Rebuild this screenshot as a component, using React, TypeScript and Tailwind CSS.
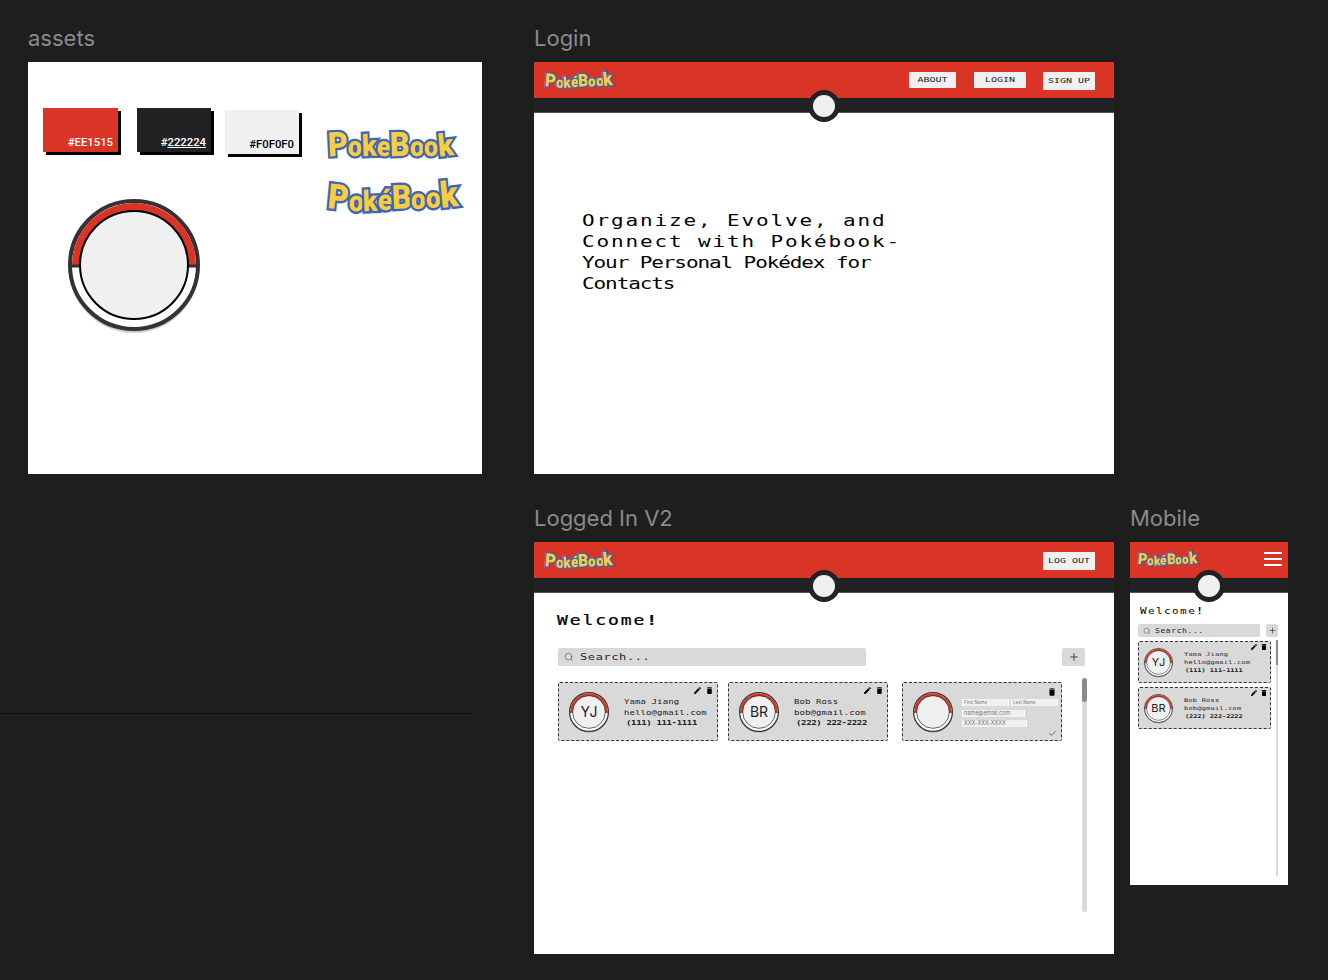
import { Check, Plus, Search } from "lucide-react";
import { MdDelete, MdEdit } from "react-icons/md";

const pixel = "[font-family:'DejaVu_Sans_Mono',monospace]";

const plainLetters = [
  { c: "P", cls: "text-[1.22em] -rotate-3" },
  { c: "o", cls: "rotate-3" },
  { c: "k", cls: "-rotate-2 text-[1.08em]" },
  { c: "e", cls: "rotate-3" },
  { c: "B", cls: "text-[1.22em] -rotate-2" },
  { c: "o", cls: "rotate-2" },
  { c: "o", cls: "-rotate-2" },
  { c: "k", cls: "-rotate-6 text-[1.12em]" },
];

const accentLetters = [
  { c: "P", cls: "text-[1.22em] rotate-6 translate-y-[0.06em]" },
  { c: "o", cls: "rotate-3 translate-y-[0.14em]" },
  { c: "k", cls: "-rotate-2 translate-y-[0.14em]" },
  { c: "é", cls: "rotate-3 translate-y-[0.1em]" },
  { c: "B", cls: "text-[1.16em] -rotate-3 translate-y-[0.04em]" },
  { c: "o", cls: "rotate-2 translate-y-[0.06em]" },
  { c: "o", cls: "-rotate-2 translate-y-[0.02em]" },
  { c: "k", cls: "-rotate-6 text-[1.26em]" },
];

function Logo({ accent = true, className = "" }: { accent?: boolean; className?: string }) {
  const letters = accent ? accentLetters : plainLetters;
  return (
    <div
      className={`flex items-baseline font-black leading-none text-[#f8cd42] origin-left scale-y-[1.1] [font-family:'Roboto',sans-serif] [-webkit-text-stroke:0.17em_#3f66b2] [paint-order:stroke_fill] ${className}`}
    >
      {letters.map((l, i) => (
        <span key={i} className={`inline-block ${l.cls}`}>
          {l.c}
        </span>
      ))}
    </div>
  );
}

function Ball({ className = "" }: { className?: string }) {
  return (
    <svg viewBox="0 0 132 132" className={`shrink-0 overflow-visible ${className}`}>
      <circle cx="66" cy="69" r="65" fill="#000" opacity="0.2" />
      <circle cx="66" cy="66" r="64" fill="#fff" stroke="#333" strokeWidth="4" />
      <path d="M4 66a62 62 0 0 1 124 0z" fill="#da3427" />
      <path d="M2 67h128" stroke="#333" strokeWidth="3" />
      <circle cx="66" cy="66" r="54" fill="#f0f0f0" stroke="#000" strokeWidth="2" />
    </svg>
  );
}

function Avatar({ initials, size }: { initials?: string; size: "lg" | "sm" }) {
  return (
    <div
      className={`relative flex items-center justify-center shrink-0 ${
        size === "lg" ? "w-10 h-10" : "w-[29px] h-[29px]"
      }`}
    >
      <Ball className="absolute inset-0 w-full h-full" />
      {initials && (
        <span
          className={`relative text-[#222224] [font-family:'Inter',sans-serif] ${
            size === "lg" ? "text-[14px]" : "text-[11px]"
          }`}
        >
          {initials}
        </span>
      )}
    </div>
  );
}

function Header({ children, logoClass }: { children: React.ReactNode; logoClass: string }) {
  return (
    <div className="relative shrink-0">
      <div className="h-9 bg-[#da3427] flex items-center justify-between">
        <Logo className={logoClass} />
        {children}
      </div>
      <div className="h-[15px] bg-[#222224] border-b border-[#555]" />
      <div className="absolute left-1/2 top-[28px] -translate-x-1/2 w-8 h-8 rounded-full bg-[#f0f0f0] border-[5.5px] border-[#222224]" />
    </div>
  );
}

function NavButton({ label, className = "" }: { label: string; className?: string }) {
  return (
    <div className={`bg-[#f0f0f0] flex items-center justify-center text-[#222224] ${className}`}>
      <span className={`text-[10px] scale-y-[0.78] ${pixel}`}>{label}</span>
    </div>
  );
}

function ContactCard({
  name,
  email,
  phone,
  initials,
}: {
  name: string;
  email: string;
  phone: string;
  initials: string;
}) {
  return (
    <div className="relative w-40 h-[59px] bg-[#d9d9d9] rounded-[2px] border border-dashed border-[#333] flex items-center pl-[10px] gap-[15px]">
      <Avatar initials={initials} size="lg" />
      <div className={`text-[#222224] text-[9px] leading-[10.5px] tracking-[0.1px] mt-[3px] ${pixel}`}>
        <div className="scale-y-[0.75] origin-left">{name}</div>
        <div className="scale-y-[0.75] origin-left">{email}</div>
        <div className="scale-y-[0.75] origin-left font-bold tracking-[-0.35px] ml-[2px]">{phone}</div>
      </div>
      <div className="absolute right-[3px] top-[3px] flex gap-[3px] text-black">
        <MdEdit className="w-[9px] h-[9px]" />
        <MdDelete className="w-[9px] h-[9px]" />
      </div>
    </div>
  );
}

function EditCard() {
  const field =
    "h-[7px] bg-[#f0f0f0] border-x border-white leading-[7px] pl-[1px] text-[#777] [font-family:'Inter',sans-serif]";
  return (
    <div className="relative w-40 h-[59px] bg-[#d9d9d9] rounded-[2px] border border-dashed border-[#333] flex items-center pl-[10px] gap-[9px]">
      <Avatar size="lg" />
      <div className="flex flex-col mt-[3px]">
        <div className="flex gap-[2px]">
          <div className={`w-[47px] text-[4.5px] ${field}`}>First Name</div>
          <div className={`w-[47px] text-[4.5px] ${field}`}>Last Name</div>
        </div>
        <div className={`w-[63px] mt-[4px] text-[5.5px] ${field}`}>name@email.com</div>
        <div className={`w-[65px] mt-[3px] text-[5.5px] ${field}`}>XXX-XXX-XXXX</div>
      </div>
      <MdDelete className="absolute right-[4px] top-[4px] w-[10px] h-[10px] text-black" />
      <Check className="absolute right-[4px] bottom-[2px] w-[9px] h-[9px] text-[#555]" strokeWidth={2} />
    </div>
  );
}

function MobileCard({
  name,
  email,
  phone,
  initials,
}: {
  name: string;
  email: string;
  phone: string;
  initials: string;
}) {
  return (
    <div className="relative w-[133px] h-[42px] bg-[#d9d9d9] rounded-[2px] border border-dashed border-[#333] flex items-center pl-[5px] gap-[11px]">
      <Avatar initials={initials} size="sm" />
      <div className={`text-[#222224] text-[7px] leading-[8px] tracking-[0.2px] ${pixel}`}>
        <div className="scale-y-[0.75] origin-left">{name}</div>
        <div className="scale-y-[0.75] origin-left">{email}</div>
        <div className="scale-y-[0.75] origin-left font-bold tracking-[-0.1px] ml-[1px]">{phone}</div>
      </div>
      <div className="absolute right-[2px] top-[1px] flex gap-[2px] text-black">
        <MdEdit className="w-[8px] h-[8px]" />
        <MdDelete className="w-[8px] h-[8px]" />
      </div>
    </div>
  );
}

function Swatch({
  hex,
  className,
  underline = false,
}: {
  hex: string;
  className: string;
  underline?: boolean;
}) {
  return (
    <div
      className={`h-[44px] shadow-[3px_3px_0_#000] flex items-end justify-end pr-[5px] pb-px text-[11.3px] leading-[16px] font-medium [font-family:'Roboto',sans-serif] ${className}`}
    >
      {underline ? (
        <span>
          #<span className="underline">{hex}</span>
        </span>
      ) : (
        <span>#{hex}</span>
      )}
    </div>
  );
}

function Frame({ label, className, children }: { label: string; className: string; children: React.ReactNode }) {
  return (
    <div className={`absolute ${className}`}>
      <div className="absolute -top-[38px] left-0 text-[22px] leading-[28px] text-[#8a8a8a] [font-family:'Inter',sans-serif]">
        {label}
      </div>
      <div className="w-full h-full bg-white flex flex-col overflow-hidden">{children}</div>
    </div>
  );
}

export default function App() {
  return (
    <div className="relative w-[1328px] h-[980px] bg-[#1e1e1e] overflow-hidden">
      <div className="absolute left-0 top-[713px] w-[472px] h-px bg-[#111]" />

      <Frame label="assets" className="left-[28px] top-[62px] w-[454px] h-[412px]">
        <div className="flex pt-[46px] pl-[15px]">
          <div className="w-[284px]">
            <div className="flex items-start">
              <Swatch hex="EE1515" className="w-[75px] bg-[#da3427] text-white" />
              <Swatch hex="222224" className="w-[74px] ml-[19px] bg-[#222224] text-white" underline />
              <Swatch hex="F0F0F0" className="w-[74px] ml-[14px] mt-[2px] bg-[#f0f0f0] text-black" />
            </div>
            <Ball className="w-[132px] h-[132px] mt-[47px] ml-[25px] -translate-y-[2px]" />
          </div>
          <div className="ml-px pt-[22px] flex flex-col gap-[18px]">
            <Logo accent={false} className="text-[25px]" />
            <Logo className="text-[26px]" />
          </div>
        </div>
      </Frame>

      <Frame label="Login" className="left-[534px] top-[62px] w-[580px] h-[412px]">
        <Header logoClass="text-[13.5px] ml-[11px]">
          <div className="flex items-start mr-[19px] mt-[1px]">
            <NavButton label="ABOUT" className="w-[47px] h-4" />
            <NavButton label="LOGIN" className="w-[52px] h-4 ml-[18px]" />
            <NavButton label="SIGN UP" className="w-[52px] h-[18px] ml-[17px]" />
          </div>
        </Header>
        <div className={`pt-[97px] pl-[48px] text-[21px] leading-[21px] text-black ${pixel}`}>
          <div className="origin-left scale-y-[0.78] tracking-[1.86px]">Organize, Evolve, and</div>
          <div className="origin-left scale-y-[0.78] tracking-[1.86px]">Connect with Pokébook-</div>
          <div className="origin-left scale-y-[0.78] tracking-[-1.1px]">Your Personal Pokédex for</div>
          <div className="origin-left scale-y-[0.78] tracking-[-1.1px]">Contacts</div>
        </div>
      </Frame>

      <Frame label="Logged In V2" className="left-[534px] top-[542px] w-[580px] h-[412px]">
        <Header logoClass="text-[13.5px] ml-[11px]">
          <NavButton label="LOG OUT" className="w-[52px] h-[18px] mr-[19px] mt-[1px]" />
        </Header>
        <div className="relative flex-1 pl-[24px] pt-[18px]">
          <div className={`-ml-px origin-left scale-y-[0.75] text-[18px] leading-[18px] tracking-[1.9px] text-black [-webkit-text-stroke:0.3px_#000] ${pixel}`}>
            Welcome<span className="font-bold">!</span>
          </div>
          <div className="flex items-center mt-[19px] w-[527px] justify-between">
            <div className="w-[308px] h-[18px] bg-[#d9d9d9] rounded-[2px] flex items-center pl-[6px] gap-[6px] text-[#222224]">
              <Search className="w-[10px] h-[10px] text-[#555]" strokeWidth={1.5} />
              <span className={`text-[12px] tracking-[0.6px] scale-y-[0.75] ${pixel}`}>Search...</span>
            </div>
            <div className="w-[23px] h-[18px] bg-[#d9d9d9] rounded-[2px] flex items-center justify-center">
              <Plus className="w-[12px] h-[12px] text-[#222224]" strokeWidth={1.5} />
            </div>
          </div>
          <div className="flex mt-[16px]">
            <ContactCard name="Yama Jiang" email="hello@gmail.com" phone="(111) 111-1111" initials="YJ" />
            <div className="ml-[10px]">
              <ContactCard name="Bob Ross" email="bob@gmail.com" phone="(222) 222-2222" initials="BR" />
            </div>
            <div className="ml-[14px]">
              <EditCard />
            </div>
          </div>
          <div className="absolute left-[548px] top-[85px] w-[5px] h-[234px] bg-[#d9d9d9] rounded-full">
            <div className="h-6 bg-[#8a8a8a] rounded-full" />
          </div>
        </div>
      </Frame>

      <Frame label="Mobile" className="left-[1130px] top-[542px] w-[158px] h-[343px]">
        <Header logoClass="text-[11.7px] ml-[8px] -mt-[3px]">
          <div className="flex flex-col gap-[4px] mr-[6px] -mt-[2px]">
            <div className="w-[18px] h-[2px] bg-white" />
            <div className="w-[18px] h-[2px] bg-white" />
            <div className="w-[18px] h-[2px] bg-white" />
          </div>
        </Header>
        <div className="relative flex-1 pl-[8px] pt-[13px]">
          <div className={`ml-[2px] origin-left scale-y-[0.75] text-[11px] leading-[11px] tracking-[1.4px] text-black ${pixel}`}>
            Welcome<span className="font-bold">!</span>
          </div>
          <div className="flex items-center mt-[7px]">
            <div className="w-[122px] h-[13px] bg-[#d9d9d9] rounded-[2px] flex items-center pl-[5px] gap-[4px] text-[#222224]">
              <Search className="w-[8px] h-[8px] text-[#555]" strokeWidth={1.5} />
              <span className={`text-[8px] tracking-[0.6px] scale-y-[0.8] ${pixel}`}>Search...</span>
            </div>
            <div className="ml-[6px] w-[12px] h-[13px] bg-[#d9d9d9] rounded-[2px] flex items-center justify-center">
              <Plus className="w-[9px] h-[9px] text-[#222224]" strokeWidth={1.5} />
            </div>
          </div>
          <div className="flex flex-col gap-[4px] mt-[4px]">
            <MobileCard name="Yama Jiang" email="hello@gmail.com" phone="(111) 111-1111" initials="YJ" />
            <MobileCard name="Bob Ross" email="bob@gmail.com" phone="(222) 222-2222" initials="BR" />
          </div>
          <div className="absolute left-[146px] top-[47px] w-[2px] h-[236px] bg-[#d9d9d9]">
            <div className="h-[25px] bg-[#8a8a8a]" />
          </div>
        </div>
      </Frame>
    </div>
  );
}
